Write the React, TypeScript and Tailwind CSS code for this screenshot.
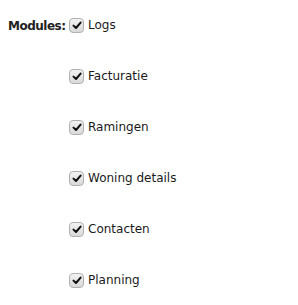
import React from 'react';

const modules = ['Logs', 'Facturatie', 'Ramingen', 'Woning details', 'Contacten', 'Planning'];

const Check = () => (
  <span className="flex h-[15px] w-[15px] shrink-0 items-center justify-center rounded-[4px] border border-[#b0b0b0] bg-gradient-to-b from-[#f2f2f2] to-[#d9d9d9]">
    <svg width="10" height="9" viewBox="0 0 10 9">
      <path d="M1.5 4.6 L4 7 L8.6 1.6" fill="none" stroke="#111" strokeWidth="2" strokeLinecap="round" strokeLinejoin="round" />
    </svg>
  </span>
);

export default function App() {
  return (
    <div className="min-h-screen bg-white pl-[8px] pt-[18px] text-[12px] text-[#1a1a1a]" style={{ fontFamily: '"DejaVu Sans", "Noto Sans", sans-serif' }}>
      <div className="flex items-start">
        <div className="w-[61px] pt-[1px] font-bold leading-[15px] tracking-[-0.5px] text-[#222]">Modules:</div>
        <ul className="flex flex-col gap-[36px]">
          {modules.map((m) => (
            <li key={m} className="flex h-[15px] items-center gap-[4px]">
              <Check />
              <span className="leading-[15px]">{m}</span>
            </li>
          ))}
        </ul>
      </div>
    </div>
  );
}
